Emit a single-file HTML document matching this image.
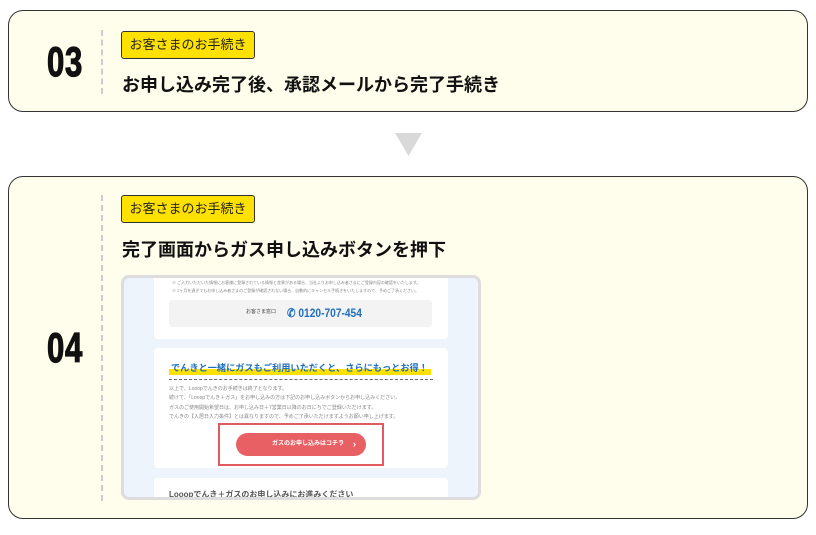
<!DOCTYPE html>
<html><head><meta charset="utf-8"><style>
*{margin:0;padding:0;box-sizing:border-box}
body{width:816px;height:535px;background:#fff;font-family:"Liberation Sans","Noto Sans CJK JP",sans-serif;position:relative;overflow:hidden}
.card{position:absolute;left:8px;width:800px;background:#fffdeb;border:1px solid #333;border-radius:15px}
.num{position:absolute;left:26px;width:60px;text-align:center;font-weight:bold;font-size:42px;color:#111;transform:scaleX(0.74);font-family:"Liberation Sans",sans-serif;-webkit-text-stroke:1.2px #111;letter-spacing:1px}
.dash{position:absolute;left:92px;border-left:2px dashed #ccc}
.badge{position:absolute;left:112px;width:134px;height:28px;background:#ffe100;border:1px solid #333;border-radius:3px;font-size:13px;line-height:26px;text-align:center;color:#222}
.title{position:absolute;left:113px;font-size:18px;font-weight:bold;color:#111}
.shot{position:absolute;left:121px;top:275px;width:360px;height:225px;border:3px solid #ddd;border-radius:8px;background:#eef4fc;overflow:hidden}
.p{position:absolute;left:30px;width:294px;background:#fff;border-radius:4px;overflow:hidden}
.t{position:absolute;font-size:5px;color:#888;white-space:nowrap}
</style></head><body>
<div class="card" style="top:10px;height:102px">
 <div class="num" style="top:27px">03</div>
 <div class="dash" style="top:19px;height:64px"></div>
 <div class="badge" style="top:20px">お客さまのお手続き</div>
 <div class="title" style="top:60px">お申し込み完了後、承認メールから完了手続き</div>
</div>
<svg style="position:absolute;left:395px;top:133px" width="27" height="23"><polygon points="0,0 27,0 13.5,23" fill="#d9d9d9"/></svg>
<div class="card" style="top:176px;height:343px">
 <div class="num" style="top:147px">04</div>
 <div class="dash" style="top:18px;height:306px"></div>
 <div class="badge" style="top:18px">お客さまのお手続き</div>
 <div class="title" style="top:59px">完了画面からガス申し込みボタンを押下</div>
</div>
<div class="shot">
 <div class="p" style="top:-10px;height:71px">
  <div class="t" style="left:18px;top:12px;font-size:4px">※ ご入力いただいた情報にお客様に登録されている情報と差異がある場合、当社よりお申し込み者さまにご登録内容の確認をいたします。</div>
  <div class="t" style="left:18px;top:20px;font-size:4px">※ 2ヶ月を過ぎてもお申し込み者さまのご登録が確認されない場合、自動的にキャンセル手続きをいたしますので、予めご了承ください。</div>
  <div style="position:absolute;left:15px;top:32px;width:263px;height:27px;background:#f3f3f3;border-radius:3px">
   <div class="t" style="left:77px;top:8px;color:#444">お客さま窓口</div>
   <div style="position:absolute;left:118px;top:6px;font-size:12px;font-weight:bold;color:#1f6fc0;transform:scaleX(.85);transform-origin:left">✆ 0120-707-454</div>
  </div>
 </div>
 <div class="p" style="top:70px;height:120px">
  <div style="position:absolute;left:15px;top:21px;width:262px;height:6px;background:#ffe100"></div>
  <div style="position:absolute;left:17px;top:12px;font-size:9.2px;font-weight:bold;color:#1f6fc0;white-space:nowrap">でんきと一緒にガスもご利用いただくと、さらにもっとお得！</div>
  <div style="position:absolute;left:15px;top:31px;width:264px;border-top:1px dashed #666"></div>
  <div class="t" style="left:15px;top:37px">以上で、Looopでんきのお手続きは終了となります。</div>
  <div class="t" style="left:15px;top:46px">続けて、「Looopでんき＋ガス」をお申し込みの方は下記のお申し込みボタンからお申し込みください。</div>
  <div class="t" style="left:15px;top:56px">ガスのご使用開始希望日は、お申し込み日＋7営業日以降のお日にちでご登録いただけます。</div>
  <div class="t" style="left:15px;top:65px">でんきの【入居日入力条件】とは異なりますので、予めご了承いただけますようお願い申し上げます。</div>
  <div style="position:absolute;left:64px;top:75px;width:166px;height:43px;border:2px solid #e05a5f"></div>
  <div style="position:absolute;left:82px;top:85px;width:130px;height:23px;background:#e86063;border-radius:12px;color:#fff;font-size:6px;font-weight:bold;line-height:23px;padding-left:36px">ガスのお申し込みはコチラ<span style="position:absolute;right:10px;font-size:9px">›</span></div>
 </div>
 <div class="p" style="top:200px;height:40px">
  <div style="position:absolute;left:15px;top:11px;font-size:8px;font-weight:bold;color:#555;white-space:nowrap">Looopでんき＋ガスのお申し込みにお進みください</div>
 </div>
</div>
</body></html>
